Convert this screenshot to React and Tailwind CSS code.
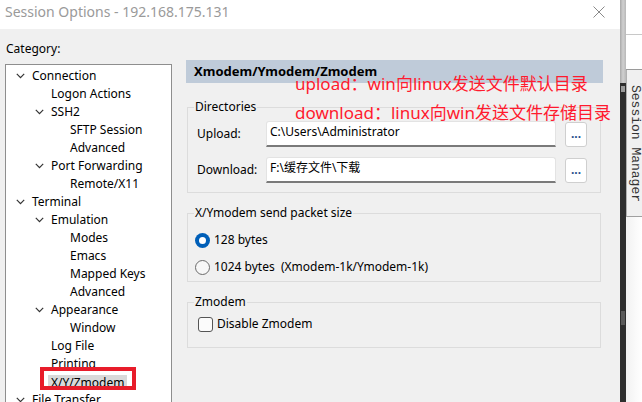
import React from "react";

const tree = [
  { t: "Connection", l: 0, c: true },
  { t: "Logon Actions", l: 1 },
  { t: "SSH2", l: 1, c: true },
  { t: "SFTP Session", l: 2 },
  { t: "Advanced", l: 2 },
  { t: "Port Forwarding", l: 1, c: true },
  { t: "Remote/X11", l: 2 },
  { t: "Terminal", l: 0, c: true },
  { t: "Emulation", l: 1, c: true },
  { t: "Modes", l: 2 },
  { t: "Emacs", l: 2 },
  { t: "Mapped Keys", l: 2 },
  { t: "Advanced", l: 2 },
  { t: "Appearance", l: 1, c: true },
  { t: "Window", l: 2 },
  { t: "Log File", l: 1 },
  { t: "Printing", l: 1 },
  { t: "X/Y/Zmodem", l: 1, sel: true },
  { t: "File Transfer", l: 0, c: true },
];

const pad = ["pl-[10px]", "pl-[29px]", "pl-[48px]"];

function Chevron() {
  return (
    <svg width="9" height="6" viewBox="0 0 9 6" className="shrink-0">
      <path d="M0.8 0.8 L4.5 4.6 L8.2 0.8" fill="none" stroke="#333" strokeWidth="1.2" />
    </svg>
  );
}

function TreeRow({ item }) {
  return (
    <div className={`h-[18px] flex items-center ${pad[item.l]}`}>
      <div className="w-[16px] flex items-center justify-start">
        {item.c ? <Chevron /> : null}
      </div>
      <span className={item.sel ? "bg-[#d9d9d9] px-[3px] -ml-[3px] leading-[15px]" : ""}>{item.t}</span>
    </div>
  );
}

function Radio({ checked }) {
  if (checked)
    return (
      <span className="w-[15px] h-[15px] rounded-full bg-[#005fb8] flex items-center justify-center shrink-0">
        <span className="w-[7px] h-[7px] rounded-full bg-white" />
      </span>
    );
  return <span className="w-[15px] h-[15px] rounded-full border border-[#6b6b6b] bg-[#f7f7f7] shrink-0" />;
}

export default function App() {
  return (
    <div
      className="flex w-[642px] h-[402px] overflow-hidden text-[12px] text-black"
      style={{ fontFamily: '"Noto Sans", "Noto Sans CJK SC", sans-serif' }}
    >
      <div className="w-[620px] h-[402px] flex flex-col shrink-0">
        <div className="h-[29px] shrink-0 bg-white flex items-center justify-between pl-[5px] pr-[15px]">
          <span className="text-[14px] text-[#9a9a9a] leading-[20px] -mt-[5px]">Session Options - 192.168.175.131</span>
          <svg width="12" height="12" viewBox="0 0 12 12" className="-mt-[6px]">
            <path d="M0.5 0.5 L11.5 11.5 M11.5 0.5 L0.5 11.5" stroke="#8a8a8a" strokeWidth="1" />
          </svg>
        </div>
        <div className="flex-1 min-h-0 overflow-hidden bg-[#f0f0f0] relative flex">
          <div className="w-[172px] shrink-0 pt-[12px] pl-[5px]">
            <div className="pl-[1px] h-[16px] leading-[16px]">Category:</div>
            <div className="mt-[7px] h-[360px] bg-white border border-[#8e8e8e] pt-[2px] relative">
              {tree.map((it, i) => (
                <TreeRow key={i} item={it} />
              ))}
            </div>
          </div>
          <div className="ml-[14px] pt-[31px] w-[417px] shrink-0">
            <div className="h-[23px] bg-[#bfcbd9] pl-[8px] flex items-center font-bold text-[13px]">
              Xmodem/Ymodem/Zmodem
            </div>
            <fieldset className="mt-[16px] ml-[1px] w-[414px] border border-[#dcdcdc] px-[6px] pb-[9px]">
              <legend className="px-[1px] leading-[16px]">Directories</legend>
              <div className="mt-[6px] flex items-center pl-[3px]">
                <span className="w-[69px]">Upload:</span>
                <div className="w-[290px] h-[26px] bg-white border border-[#e3e3e3] border-b-[#7a7a7a] border-b-2 rounded-t-[3px] pl-[3px] pt-[2px] leading-[16px]">
                  C:\Users\Administrator
                </div>
                <div className="ml-[9px] w-[22px] h-[25px] bg-white border border-[#cfcfcf] rounded-[3px] flex items-center justify-center text-[#1f4e8c] font-bold leading-[12px]">
                  ...
                </div>
              </div>
              <div className="mt-[10px] flex items-center pl-[3px]">
                <span className="w-[69px]">Download:</span>
                <div className="w-[290px] h-[26px] bg-white border border-[#e3e3e3] border-b-[#7a7a7a] border-b-2 rounded-t-[3px] pl-[3px] pt-[2px] leading-[16px]">
                  F:\缓存文件\下载
                </div>
                <div className="ml-[9px] w-[22px] h-[25px] bg-white border border-[#cfcfcf] rounded-[3px] flex items-center justify-center text-[#1f4e8c] font-bold leading-[12px]">
                  ...
                </div>
              </div>
            </fieldset>
            <fieldset className="mt-[12px] ml-[1px] w-[414px] border border-[#dcdcdc] px-[6px] pb-[5px]">
              <legend className="px-[1px] leading-[16px]">X/Ymodem send packet size</legend>
              <div className="mt-[10px] h-[18px] flex items-center pl-[1px] gap-[4px]">
                <Radio checked />
                <span>128 bytes</span>
              </div>
              <div className="mt-[9px] h-[18px] flex items-center pl-[1px] gap-[4px]">
                <Radio />
                <span className="whitespace-pre">1024 bytes  (Xmodem-1k/Ymodem-1k)</span>
              </div>
            </fieldset>
            <fieldset className="mt-[12px] ml-[1px] w-[414px] border border-[#dcdcdc] px-[6px] pb-[15px]">
              <legend className="px-[1px] leading-[16px]">Zmodem</legend>
              <div className="mt-[6px] h-[16px] flex items-center pl-[4px] gap-[4px]">
                <span className="w-[15px] h-[15px] rounded-[3px] border border-[#555] bg-[#fbfbfb] shrink-0" />
                <span>Disable Zmodem</span>
              </div>
            </fieldset>
          </div>

          {/* annotations */}
          <div className="absolute left-[295px] top-[45px] text-[17px] leading-[20px] text-[#ff1a2e] whitespace-nowrap">
            upload：win向linux发送文件默认目录
          </div>
          <div className="absolute left-[295px] top-[74px] text-[17px] leading-[20px] text-[#ff1a2e] whitespace-nowrap">
            download：linux向win发送文件存储目录
          </div>
          <div className="absolute left-[40px] top-[338px] w-[96px] h-[23px] border-[4px] border-[#e81c2a]" />
        </div>
      </div>

      {/* background app strip */}
      <div className="w-[6px] flex flex-col shrink-0">
        <div className="h-[83px] shrink-0 bg-gradient-to-r from-[#a8a8a8] via-[#d0d0d0] to-[#b8b8b8]" />
        <div className="flex-1 bg-[#2e2e2e] flex flex-col">
          <div className="mt-[3px] h-[6px] mx-[1px] bg-[#9a9a9a]" />
          <div className="mt-[219px] h-[14px] mx-[1px] bg-[#5a5a5a]" />
        </div>
      </div>
      <div className="flex-1 flex flex-col">
        <div className="h-[35px] shrink-0 bg-white border-b border-[#c8c8c8]" />
        <div className="h-[35px] shrink-0 bg-white border-b border-[#9a9a9a]" />
        <div className="h-[147px] shrink-0 bg-[#f0f0f0] border-b border-[#a0a0a0] border-l border-l-[#b0b0b0] flex justify-center pt-[15px]">
          <span
            className="[writing-mode:vertical-rl] text-[13px] leading-[14px] text-[#333]"
            style={{ fontFamily: '"Liberation Mono", monospace' }}
          >
            Session Manager
          </span>
        </div>
        <div className="flex-1 bg-gradient-to-r from-[#f2f2f2] to-white" />
      </div>
    </div>
  );
}
